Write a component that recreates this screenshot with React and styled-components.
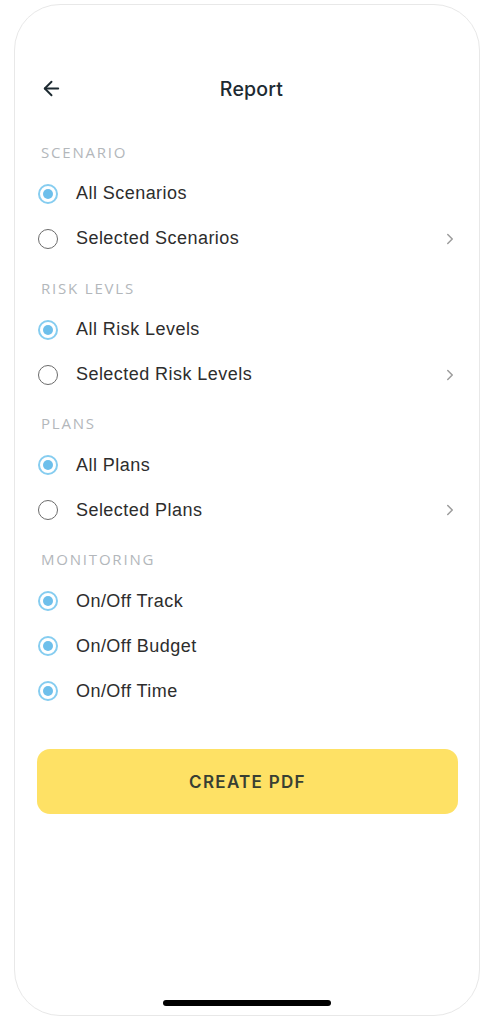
import styled, { createGlobalStyle } from 'styled-components';
import { ArrowLeft, ChevronRight } from 'lucide-react';

const sections = [
    {
        title: 'SCENARIO',
        rows: [
            { label: 'All Scenarios', checked: true },
            { label: 'Selected Scenarios', more: true },
        ],
    },
    {
        title: 'RISK LEVLS',
        rows: [
            { label: 'All Risk Levels', checked: true },
            { label: 'Selected Risk Levels', more: true },
        ],
    },
    {
        title: 'PLANS',
        rows: [
            { label: 'All Plans', checked: true },
            { label: 'Selected Plans', more: true },
        ],
    },
    {
        title: 'MONITORING',
        rows: [
            { label: 'On/Off Track', checked: true },
            { label: 'On/Off Budget', checked: true },
            { label: 'On/Off Time', checked: true },
        ],
    },
];

const App = () => {
    return (
        <>
            <GlobalStyle />
            <Frame>
                <Header>
                    <BackButton>
                        <ArrowLeft size={23} strokeWidth={2} />
                    </BackButton>
                    <Title>Report</Title>
                </Header>

                {sections.map((section) => (
                    <Section key={section.title}>
                        <SectionLabel>{section.title}</SectionLabel>
                        {section.rows.map((row) => (
                            <Row key={row.label}>
                                <Radio $checked={row.checked} />
                                <RowText>{row.label}</RowText>
                                {row.more && (
                                    <Chevron>
                                        <ChevronRight size={18} strokeWidth={2} />
                                    </Chevron>
                                )}
                            </Row>
                        ))}
                    </Section>
                ))}

                <CreateButton>CREATE PDF</CreateButton>

                <Spacer />
                <HomeIndicator />
            </Frame>
        </>
    );
};

export default App;

const GlobalStyle = createGlobalStyle`
    body {
        margin: 0;
        background: #ffffff;
        font-family: 'Inter', 'Liberation Sans', sans-serif;
    }
`;

const Frame = styled.div`
    box-sizing: border-box;
    margin: 4px 15px 0 14px;
    height: 1012px;
    border: 1.5px solid #e8e8e8;
    border-radius: 46px;
    padding: 62px 24px 0 22px;
    display: flex;
    flex-direction: column;
`;

const Header = styled.div`
    position: relative;
    height: 44px;
    display: flex;
    align-items: center;
    justify-content: center;
    margin-bottom: 14.8px;
`;

const BackButton = styled.div`
    position: absolute;
    left: 3px;
    top: 10px;
    color: #1d2a31;
    display: flex;
`;

const Title = styled.h1`
    margin: 0 0 0 11px;
    font-family: 'Inter', sans-serif;
    font-size: 19.5px;
    font-weight: 500;
    color: #1d2a31;
    letter-spacing: 0.2px;
`;

const Section = styled.div`
    display: flex;
    flex-direction: column;
`;

const SectionLabel = styled.div`
    height: 20px;
    line-height: 20px;
    margin: 16.2px 0 9.5px 4px;
    font-family: 'Open Sans', sans-serif;
    font-size: 15px;
    letter-spacing: 1.8px;
    color: #b3b7bb;
`;

const Row = styled.div`
    height: 45px;
    display: flex;
    align-items: center;
`;

const Radio = styled.span`
    box-sizing: border-box;
    width: 20px;
    height: 20px;
    margin-left: 1px;
    border-radius: 50%;
    border: ${(p) => (p.$checked ? '2.5px solid #86cdf0' : '1.8px solid #6b6b6b')};
    display: flex;
    align-items: center;
    justify-content: center;
    flex-shrink: 0;

    &::after {
        content: '';
        display: ${(p) => (p.$checked ? 'block' : 'none')};
        width: 10px;
        height: 10px;
        border-radius: 50%;
        background: #6dbfeb;
    }
`;

const RowText = styled.span`
    margin-left: 18px;
    font-family: 'Liberation Sans', Arial, sans-serif;
    font-size: 18px;
    color: #2d2d2d;
    letter-spacing: 0.45px;
    flex: 1;
`;

const Chevron = styled.span`
    color: #9c9c9c;
    display: flex;
    margin-right: -4px;
`;

const CreateButton = styled.button`
    margin-top: 35.9px;
    margin-left: 0;
    height: 65px;
    width: 421px;
    border: none;
    border-radius: 13px;
    background: #fee165;
    font-family: 'Inter', sans-serif;
    font-size: 17px;
    font-weight: 600;
    letter-spacing: 1.3px;
    color: #383f33;
`;

const Spacer = styled.div`
    flex: 1;
`;

const HomeIndicator = styled.div`
    align-self: center;
    width: 168px;
    height: 6px;
    border-radius: 3px;
    background: #000;
    margin: 0 0 9px 2px;
`;
